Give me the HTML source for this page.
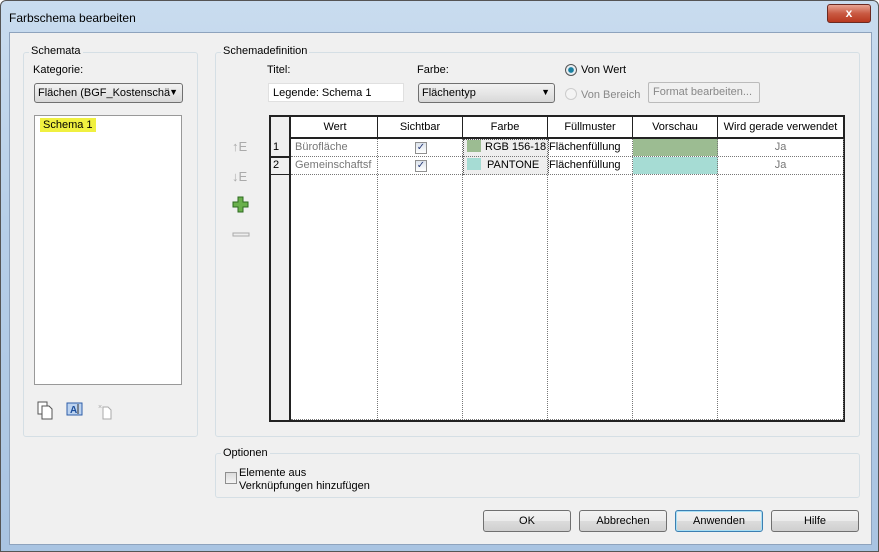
<!DOCTYPE html>
<html><head><style>
*{margin:0;padding:0;box-sizing:border-box}
body{width:879px;height:552px;overflow:hidden;font-family:"Liberation Sans",sans-serif;font-size:11px;color:#000;background:#fff}
.win{position:absolute;left:0;top:0;width:879px;height:552px;background:linear-gradient(#c9dcef,#b7cfe8 40%,#a9c4e2);border:1px solid #555;border-radius:6px 6px 0 0}
.client{position:absolute;left:8px;top:31px;width:863px;height:513px;background:#f0f0f0;border:1px solid #8ea3bd}
.abs{position:absolute}
.grp{position:absolute;border:1px solid #d5dfe5;border-radius:3px}
.lbl{position:absolute;background:#f0f0f0;padding:0 2px}
.btn{position:absolute;height:22px;border:1px solid #707070;border-radius:3px;background:linear-gradient(#f2f2f2,#ebebeb 50%,#dcdcdc 50%,#cfcfcf);text-align:center;line-height:20px;font-size:11px}
.c{position:absolute;height:18px;line-height:17px;white-space:nowrap;overflow:hidden;padding:0 2px}
.h{position:absolute;top:0;height:20px;line-height:20px;text-align:center}
.vl{position:absolute;top:20px;bottom:0;border-left:1px dotted #777}
.hl{position:absolute;left:20px;right:0;border-top:1px dotted #777}
.cb{display:inline-block;width:12px;height:12px;border:1px solid #8f8f8f;background:linear-gradient(#dde4ec,#fff);font-size:10px;line-height:10px;color:#2a3d7a;text-align:center;margin-top:2px}
</style></head><body>
<div class="win">
<div class="abs" style="left:8px;top:10px;font-size:12px;color:#000">Farbschema bearbeiten</div>
<div class="abs" style="left:826px;top:3px;width:44px;height:19px;border:1px solid #6b2a22;border-radius:3px;background:linear-gradient(#e8a493,#c95a43 50%,#b8381f);color:#fff;text-align:center;font-weight:bold;font-size:12px;line-height:17px">x</div>
<div class="client"></div>

<div class="grp" style="left:22px;top:51px;width:175px;height:385px"></div>
<div class="lbl" style="left:28px;top:44px">Schemata</div>
<div class="abs" style="left:32px;top:63px">Kategorie:</div>
<div class="abs" style="left:33px;top:82px;width:149px;height:20px;border:1px solid #707070;border-radius:3px;background:linear-gradient(#f2f2f2,#e6e6e6 50%,#d8d8d8);padding:3px 3px;font-size:11px;overflow:hidden;white-space:nowrap">Flächen (BGF_Kostenschä<span style="position:absolute;right:4px;top:3px;font-size:9px">▼</span></div>
<div class="abs" style="left:33px;top:114px;width:148px;height:270px;background:#fff;border:1px solid #999"></div>
<div class="abs" style="left:39px;top:117px;background:#f0f040;padding:1px 3px;font-size:11px">Schema 1</div>
<svg class="abs" style="left:36px;top:400px" width="90" height="20">
<rect x="1" y="1" width="9" height="12" fill="#fff" stroke="#555"/><path d="M5 5h7l3 3v10H5z" fill="#fff" stroke="#555"/>
<rect x="30" y="2" width="15" height="12" fill="#bcd3f0" stroke="#2e5ea8"/><text x="33" y="12" font-size="10" font-weight="bold" fill="#1d4f9c" font-family="Liberation Sans">A</text><path d="M41 3v10" stroke="#333"/>
<path d="M66 6h5l3 3v9H66z" fill="#fff" stroke="#aaa"/><text x="61" y="8" font-size="7" fill="#aaa">×</text>
</svg>

<div class="grp" style="left:214px;top:51px;width:645px;height:385px"></div>
<div class="lbl" style="left:220px;top:44px">Schemadefinition</div>
<div class="abs" style="left:266px;top:63px">Titel:</div>
<div class="abs" style="left:267px;top:82px;width:136px;height:19px;background:#fff;border:1px solid #e0e0e0;padding:3px 4px">Legende: Schema 1</div>
<div class="abs" style="left:416px;top:63px">Farbe:</div>
<div class="abs" style="left:417px;top:82px;width:137px;height:20px;border:1px solid #707070;border-radius:3px;background:linear-gradient(#f2f2f2,#e6e6e6 50%,#d8d8d8);padding:3px 3px">Flächentyp<span style="position:absolute;right:4px;top:3px;font-size:9px">▼</span></div>
<div class="abs" style="left:564px;top:63px;width:12px;height:12px;border-radius:50%;border:1px solid #555;background:radial-gradient(#1a7fa0 35%,#e8eef2 45%)"></div>
<div class="abs" style="left:580px;top:63px">Von Wert</div>
<div class="abs" style="left:564px;top:87px;width:12px;height:12px;border-radius:50%;border:1px solid #ccc;background:#f4f4f4"></div>
<div class="abs" style="left:580px;top:88px;color:#888">Von Bereich</div>
<div class="abs" style="left:647px;top:81px;width:112px;height:21px;border:1px solid #bbb;border-radius:2px;color:#888;padding:3px 4px">Format bearbeiten...</div>

<svg class="abs" style="left:230px;top:136px" width="20" height="105">
<text x="1" y="14" font-size="13" fill="#aaa" font-family="Liberation Sans">↑E</text>
<text x="1" y="44" font-size="13" fill="#aaa" font-family="Liberation Sans">↓E</text>
<path d="M7 60h5v5h5v5h-5v5H7v-5H2v-5h5z" fill="#6ab04c" stroke="#2d6a1f"/>
<rect x="2" y="96" width="16" height="3" fill="#eee" stroke="#aaa"/>
</svg>

<div class="abs" style="left:268px;top:114px;width:576px;height:307px;background:#fff;border:2px solid #222">
  <div class="abs" style="left:0;top:0;width:20px;bottom:0;background:#f0f0f0;border-right:2px solid #222"></div>
  <div class="abs" style="left:20px;top:0;right:0;height:22px;border-bottom:2px solid #222"></div>
  <div class="h" style="left:22px;width:85px;border-right:1px solid #222">Wert</div>
  <div class="h" style="left:107px;width:85px;border-right:1px solid #222">Sichtbar</div>
  <div class="h" style="left:192px;width:85px;border-right:1px solid #222">Farbe</div>
  <div class="h" style="left:277px;width:85px;border-right:1px solid #222">Füllmuster</div>
  <div class="h" style="left:362px;width:85px;border-right:1px solid #222">Vorschau</div>
  <div class="h" style="left:447px;width:125px">Wird gerade verwendet</div>
  <div class="abs" style="left:0;width:20px;top:39px;border-top:2px solid #222"></div>
  <div class="abs" style="left:0;width:20px;top:57px;border-top:1px solid #222"></div>
  <div class="abs" style="left:192px;top:22px;width:86px;height:36px;background:#eee;border:1px dotted #555"></div>
  <div class="abs" style="left:362px;top:22px;width:85px;height:17px;background:#9cbc92"></div>
  <div class="abs" style="left:362px;top:40px;width:85px;height:17px;background:#a6dcd4"></div>
  <div class="vl" style="left:106px;top:22px"></div>
  <div class="vl" style="left:191px;top:22px"></div>
  <div class="vl" style="left:276px;top:22px"></div>
  <div class="vl" style="left:361px;top:22px"></div>
  <div class="vl" style="left:446px;top:22px"></div>
  <div class="vl" style="left:572px;top:22px"></div>
  <div class="hl" style="top:39px"></div>
  <div class="hl" style="top:57px"></div>
  <div class="abs" style="left:20px;right:0;bottom:0;border-top:1px dotted #777"></div>
  <div class="c" style="left:0;top:22px">1</div>
  <div class="c" style="left:0;top:40px">2</div>
  <div class="c" style="left:22px;top:22px;color:#777;width:84px">Bürofläche</div>
  <div class="c" style="left:22px;top:40px;color:#777;width:84px">Gemeinschaftsf</div>
  <div class="c" style="left:142px;top:22px"><span class="cb">✓</span></div>
  <div class="c" style="left:142px;top:40px"><span class="cb">✓</span></div>
  <div class="c" style="left:194px;top:22px;width:84px"><span style="display:inline-block;width:14px;height:12px;background:#9cbc92;vertical-align:-2px;margin-right:4px"></span>RGB 156-18</div>
  <div class="c" style="left:194px;top:40px;width:84px"><span style="display:inline-block;width:14px;height:12px;background:#a6dcd4;vertical-align:-2px;margin-right:6px"></span>PANTONE</div>
  <div class="c" style="left:276px;top:22px">Flächenfüllung</div>
  <div class="c" style="left:276px;top:40px">Flächenfüllung</div>
  <div class="c" style="left:447px;top:22px;width:125px;text-align:center;color:#777">Ja</div>
  <div class="c" style="left:447px;top:40px;width:125px;text-align:center;color:#777">Ja</div>
</div>

<div class="grp" style="left:214px;top:452px;width:645px;height:45px"></div>
<div class="lbl" style="left:220px;top:446px">Optionen</div>
<div class="abs" style="left:224px;top:471px;width:12px;height:12px;border:1px solid #8f8f8f;background:linear-gradient(#dcdcdc,#f4f4f4)"></div>
<div class="abs" style="left:238px;top:466px;line-height:13px">Elemente aus<br>Verknüpfungen hinzufügen</div>

<div class="btn" style="left:482px;top:509px;width:88px">OK</div>
<div class="btn" style="left:578px;top:509px;width:88px">Abbrechen</div>
<div class="btn" style="left:674px;top:509px;width:88px;border-color:#3c7fb1;box-shadow:inset 0 0 0 1px #a8dff5">Anwenden</div>
<div class="btn" style="left:770px;top:509px;width:88px">Hilfe</div>
</div>
</body></html>
